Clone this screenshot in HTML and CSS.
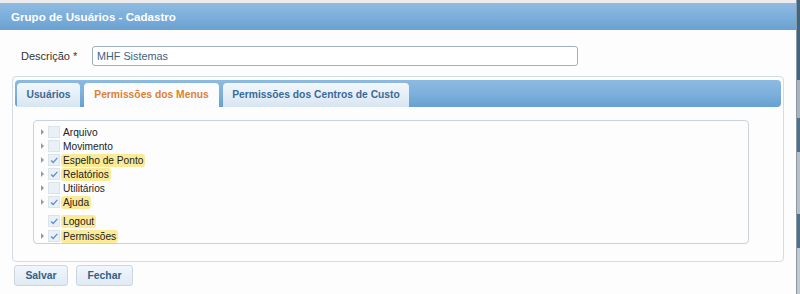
FILE: index.html
```html
<!DOCTYPE html>
<html lang="pt">
<head>
<meta charset="utf-8">
<title>Grupo de Usuários - Cadastro</title>
<link rel="stylesheet" href="styles.css">
</head>
<body>
<div class="page">
  <div class="window">
    <div class="titlebar">Grupo de Usuários - Cadastro</div>
    <div class="form-row">
      <label class="label">Descrição *</label>
      <div class="input">MHF Sistemas</div>
    </div>
    <div class="tabpanel">
      <div class="tabstrip">
        <div class="tab t1">Usuários</div>
        <div class="tab t2 active">Permissões dos Menus</div>
        <div class="tab t3">Permissões dos Centros de Custo</div>
      </div>
      <div class="tree">
        <div class="row"><span class="arrow"></span><span class="cb"></span><span class="txt">Arquivo</span></div>
        <div class="row"><span class="arrow"></span><span class="cb"></span><span class="txt">Movimento</span></div>
        <div class="row"><span class="arrow"></span><span class="cb on"><svg viewBox="0 0 12 12"><path d="M2.5 6.5 L5 9 L10 3.5" /></svg></span><span class="txt hl">Espelho de Ponto</span></div>
        <div class="row"><span class="arrow"></span><span class="cb on"><svg viewBox="0 0 12 12"><path d="M2.5 6.5 L5 9 L10 3.5" /></svg></span><span class="txt hl">Relatórios</span></div>
        <div class="row"><span class="arrow"></span><span class="cb"></span><span class="txt">Utilitários</span></div>
        <div class="row"><span class="arrow"></span><span class="cb on"><svg viewBox="0 0 12 12"><path d="M2.5 6.5 L5 9 L10 3.5" /></svg></span><span class="txt hl">Ajuda</span></div>
        <div class="row logout"><span class="arrow none"></span><span class="cb on"><svg viewBox="0 0 12 12"><path d="M2.5 6.5 L5 9 L10 3.5" /></svg></span><span class="txt hl">Logout</span></div>
        <div class="row perm"><span class="arrow"></span><span class="cb on"><svg viewBox="0 0 12 12"><path d="M2.5 6.5 L5 9 L10 3.5" /></svg></span><span class="txt hl">Permissões</span></div>
      </div>
    </div>
    <div class="buttons">
      <button class="btn salvar">Salvar</button>
      <button class="btn fechar">Fechar</button>
    </div>
  </div>
  <div class="side"></div>
</div>
</body>
</html>
```

FILE: styles.css
```css
html, body {
  margin: 0;
  padding: 0;
  background: #fdfdfd;
}
body {
  font-family: "Liberation Sans", Arial, sans-serif;
  color: #222;
}
.page {
  display: flex;
  width: 800px;
  height: 294px;
  overflow: hidden;
}
.window {
  width: 796px;
  background: #fdfdfd;
  border-top: 3px solid #ececec;
  box-sizing: border-box;
}
.side {
  flex: 1;
  background: linear-gradient(to bottom, #3f6584 0, #3f6584 80px, #aab3bb 80px, #aab3bb 118px, #4f708d 118px, #4f708d 152px, #b8bfc6 152px, #b8bfc6 214px, #4f708d 214px, #4f708d 248px, #c4c9ce 248px);
  border-left: 1px solid #8c98a3;
}
.titlebar {
  height: 27px;
  line-height: 27px;
  padding-left: 11px;
  background: linear-gradient(to bottom, #8fbbe0 0%, #7eb0dc 45%, #6aa1d1 100%);
  color: #fff;
  font-weight: bold;
  font-size: 11.6px;
}
.form-row {
  display: flex;
  align-items: center;
  margin-top: 16px;
  height: 20px;
}
.label {
  margin-left: 21px;
  width: 71px;
  font-size: 11px;
  color: #333;
}
.input {
  width: 480px;
  height: 18px;
  line-height: 18px;
  padding-left: 4px;
  border: 1px solid #9fb0c0;
  border-radius: 3px;
  background: #fff;
  font-size: 10.8px;
  color: #3e5f85;
}
.tabpanel {
  margin: 10px 0 0 12px;
  width: 772px;
  height: 186px;
  box-sizing: border-box;
  border: 1px solid #d3dce3;
  border-radius: 4px;
  padding: 3px 2px 0 2px;
}
.tabstrip {
  height: 27px;
  border-radius: 4px;
  background: linear-gradient(to bottom, #8dbae0 0%, #7db0dc 50%, #67a0d0 100%);
  display: flex;
  align-items: flex-end;
  padding-left: 2px;
  gap: 4px;
}
.tab {
  height: 24px;
  line-height: 24px;
  box-sizing: border-box;
  text-align: center;
  border-radius: 4px 4px 0 0;
  background: linear-gradient(to bottom, #f2f7fb 0%, #e3edf6 60%, #d6e5f1 100%);
  color: #3b6a98;
  font-weight: bold;
  font-size: 10.3px;
}
.tab.t1 { width: 63px; }
.tab.t2 { width: 135px; }
.tab.t3 { width: 186px; }
.tab.active {
  background: #fbfcfd;
  color: #dc8232;
}
.tree {
  margin: 13px 0 0 18px;
  width: 716px;
  height: 124px;
  box-sizing: border-box;
  border: 1px solid #c9d3dc;
  border-radius: 4px;
  padding: 4px 0 0 6px;
  background: #fdfdfd;
}
.row {
  height: 14px;
  display: flex;
  align-items: center;
  font-size: 10.2px;
}
.row.logout { margin-top: 5px; }
.row.perm { margin-top: 1px; }
.arrow {
  width: 0;
  height: 0;
  border-top: 3px solid transparent;
  border-bottom: 3px solid transparent;
  border-left: 3px solid #8b9fb3;
  margin-right: 4px;
  margin-left: 1px;
}
.arrow.none { border-left-color: transparent; }
.cb {
  width: 12px;
  height: 12px;
  box-sizing: border-box;
  border: 1px solid #dbe4ec;
  background: #e9f0f6;
  margin-right: 1px;
  display: flex;
}
.cb svg {
  width: 10px;
  height: 10px;
}
.cb svg path {
  fill: none;
  stroke: #5f93c8;
  stroke-width: 1.6;
}
.txt {
  padding: 0 2px;
  line-height: 13px;
  color: #222;
}
.txt.hl {
  background: #fbeb97;
  border-radius: 3px;
}
.buttons {
  display: flex;
  gap: 8px;
  margin: 3px 0 0 14px;
}
.btn {
  height: 21px;
  box-sizing: border-box;
  border: 1px solid #c9d7e3;
  border-radius: 3px;
  background: linear-gradient(to bottom, #f1f6fa 0%, #dfeaf4 100%);
  color: #355f8a;
  font-family: "Liberation Sans", Arial, sans-serif;
  font-weight: bold;
  font-size: 10.4px;
  padding: 0;
  text-align: center;
}
.btn.salvar { width: 54px; }
.btn.fechar { width: 57px; }
```
